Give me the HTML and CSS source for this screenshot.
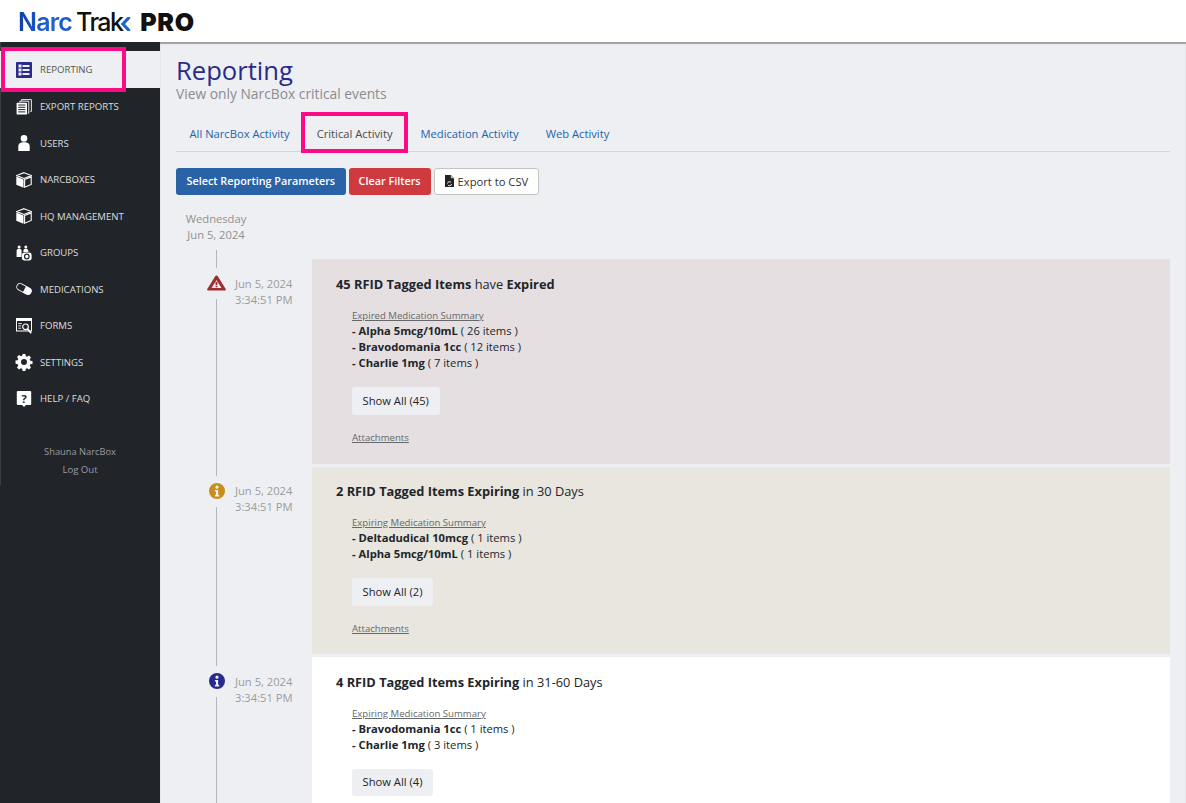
FILE: index.html
```html
<!DOCTYPE html>
<html lang="en">
<head>
<meta charset="utf-8">
<title>NarcTrak PRO - Reporting</title>
<link rel="stylesheet" href="styles.css">
</head>
<body>
<svg class="defs" width="0" height="0" aria-hidden="true">
  <symbol id="box" viewBox="0 0 16 16"><path d="M8 .7 15.300 3.600 8 6.500.7 3.600Z" fill="none" stroke="currentColor" stroke-width="1.100"/><path d="M.3 4.600 7.500 7.500V15.800L.3 12.800Z" fill="currentColor"/><path d="M15.200 4.900V12.500L8.600 15.200V7.600Z" fill="none" stroke="currentColor" stroke-width="1.100"/></symbol>
  <symbol id="info" viewBox="0 0 16 16"><path fill-rule="evenodd" d="M8 0a8 8 0 1 0 0 16A8 8 0 0 0 8 0ZM8 2.600a1.600 1.600 0 1 1 0 3.200 1.600 1.600 0 0 1 0-3.200ZM5.900 6.900h3.200v4.900h1.100v1.600H5.900v-1.600H7V8.500H5.900Z" fill="currentColor"/></symbol>
</svg>
<header class="topbar">
  <div class="logo"><span class="logo-narc">Narc</span><span class="logo-trak">Trak</span><svg class="logo-chevron" viewBox="0 0 10 14"><path d="M8.500 0 2 7l6.500 7" fill="none" stroke="#1f62cc" stroke-width="3.200"/></svg><span class="logo-pro">PRO</span></div>
</header>
<div class="shell">
  <nav class="sidebar">
    <a class="nav-item active"><svg class="nav-icon" viewBox="0 0 16 16"><rect width="16" height="16" rx="1" fill="#2a2a8c"/><path d="M2.500 2.500h3v3h-3zM2.500 6.500h3v3h-3zM2.500 10.500h3v3h-3zM6.500 3h7v2h-7zM6.500 7h7v2h-7zM6.500 11h7v2h-7z" fill="#eeeff2"/></svg>Reporting<span class="callout callout-nav"></span></a>
    <a class="nav-item"><svg class="nav-icon" viewBox="0 0 16 16"><g fill="none" stroke="currentColor" stroke-width=".9"><path d="M5.500 1.800V.6h9.900v11.800h-1.200"/><path d="M3.800 3.400V2.200h9v12h-1.100"/></g><rect x=".6" y="3.800" width="10.400" height="11.800" rx=".6" fill="currentColor"/><path d="M2.200 6h7.200M2.200 8.300h7.200M2.200 10.600h7.200M2.200 12.900h7.200" stroke="#212529" stroke-width="1"/></svg>Export Reports</a>
    <a class="nav-item"><svg class="nav-icon" viewBox="0 0 16 16"><circle cx="8" cy="3.400" r="3.300" fill="currentColor"/><path d="M2.300 16V11.500C2.300 8.600 4.500 7.300 8 7.300s5.700 1.300 5.700 4.200V16Z" fill="currentColor"/></svg>Users</a>
    <a class="nav-item"><svg class="nav-icon"><use href="#box"/></svg>NarcBoxes</a>
    <a class="nav-item"><svg class="nav-icon"><use href="#box"/></svg>HQ Management</a>
    <a class="nav-item"><svg class="nav-icon" viewBox="0 0 16 16"><g fill="currentColor"><circle cx="3.100" cy="1.900" r="1.500"/><circle cx="9.800" cy="1.900" r="1.500"/><path d="M.6 12V5.700c0-1.300.9-2 2.500-2s2.500.7 2.500 2V12ZM7.400 7V5.700c0-1.300.9-2 2.400-2s2.500.7 2.500 2V7Z"/><rect x="6" y="7.400" width="9.600" height="8.200" rx="2.400"/></g><circle cx="10.800" cy="11.500" r="2.300" fill="none" stroke="#212529" stroke-width="1.200"/></svg>Groups</a>
    <a class="nav-item"><svg class="nav-icon" viewBox="0 0 16 16"><g transform="rotate(28 8 8)"><rect x=".2" y="4.600" width="15.600" height="6.800" rx="3.400" fill="none" stroke="currentColor" stroke-width=".9"/><path d="M8.500 4.600h3.900a3.400 3.400 0 0 1 0 6.800H8.500Z" fill="currentColor"/></g></svg>Medications</a>
    <a class="nav-item"><svg class="nav-icon" viewBox="0 0 16 16"><rect x=".5" y=".5" width="15" height="12.500" fill="none" stroke="currentColor"/><rect width="16" height="3" fill="currentColor"/><path d="M2.300 5.600h3.500M2.300 7.900h2.800M2.300 10.200h2.800" stroke="currentColor" stroke-width=".9"/><circle cx="9.500" cy="8.800" r="2.800" fill="#212529" stroke="currentColor" stroke-width="1.200"/><path d="m11.500 10.900 3.700 4.200" stroke="currentColor" stroke-width="1.600"/></svg>Forms</a>
    <a class="nav-item"><svg class="nav-icon" viewBox="0 0 16 16"><path fill-rule="evenodd" d="M6.600 0h2.800l.4 2.200 1.300.6 1.900-1.200 2 2-1.300 1.800.6 1.300 2.200.4v2.800l-2.200.4-.6 1.300 1.300 1.900-2 2-1.900-1.300-1.300.6-.4 2.200H6.600l-.4-2.200-1.300-.6-1.900 1.300-2-2 1.300-1.900-.6-1.300L-.5 9.400V6.600l2.200-.4.600-1.300L1 3l2-2 1.900 1.300 1.300-.6ZM8 5a3 3 0 1 0 0 6 3 3 0 0 0 0-6Z" fill="currentColor"/></svg>Settings</a>
    <a class="nav-item"><svg class="nav-icon" viewBox="0 0 16 16"><path d="M1.800 0h12.400a1 1 0 0 1 1 1v12a1 1 0 0 1-1 1H10l-2 2-2-2H1.800a1 1 0 0 1-1-1V1a1 1 0 0 1 1-1Z" fill="currentColor"/><text class="help-mark" x="8" y="11.500" text-anchor="middle">?</text></svg>Help / FAQ</a>
    <div class="account">
      <div class="account-name">Shauna NarcBox</div>
      <div>Log Out</div>
    </div>
  </nav>
  <main class="content">
    <h1 class="page-title">Reporting</h1>
    <p class="page-sub">View only NarcBox critical events</p>
    <div class="tabs">
      <a class="tab">All NarcBox Activity</a>
      <a class="tab current">Critical Activity<span class="callout callout-tab"></span></a>
      <a class="tab">Medication Activity</a>
      <a class="tab">Web Activity</a>
    </div>
    <div class="actions">
      <button class="btn btn-blue">Select Reporting Parameters</button>
      <button class="btn btn-red">Clear Filters</button>
      <button class="btn btn-white"><svg class="csv-icon" viewBox="0 0 9 12"><path d="M0 0h5.800L9 3.200V12H0Z" fill="#222"/><path d="M5.800 0V3.200H9Z" fill="#bbb"/><path d="M2.500 8.500a2 2 0 0 1 3.600-1M6.500 9a2 2 0 0 1-3.600 1" fill="none" stroke="#fff" stroke-width=".9"/></svg>Export to CSV</button>
    </div>
    <div class="day">Wednesday<br>Jun 5, 2024</div>
    <section class="timeline">
      <article class="entry entry-first">
        <div class="rail">
          <span class="seg seg-top"></span>
          <svg class="mark mark-warn" viewBox="0 0 20 16"><path fill-rule="evenodd" d="M10 0c.5 0 .9.2 1.200.7l8.500 13.500c.5.800 0 1.800-1 1.800H1.300c-1 0-1.500-1-1-1.800L8.800.7C9.100.2 9.500 0 10 0ZM10 4.800 4.800 13.300H15.200ZM9 6.800h2v3.400H9ZM9 10.900h2v1.700H9Z" fill="#9c2f31"/></svg>
          <span class="seg seg-rest"></span>
        </div>
        <div class="stamp">Jun 5, 2024<br>3:34:51 PM</div>
        <div class="card card-red">
          <h2 class="card-title"><b>45 RFID Tagged Items</b> have <b>Expired</b></h2>
          <div class="summary">
            <u class="sum-head">Expired Medication Summary</u>
            <div><b>- Alpha 5mcg/10mL</b> ( 26 items )</div>
            <div><b>- Bravodomania 1cc</b> ( 12 items )</div>
            <div><b>- Charlie 1mg</b> ( 7 items )</div>
            <button class="show-all">Show All (45)</button>
            <u class="attach">Attachments</u>
          </div>
        </div>
      </article>
      <article class="entry entry-second">
        <div class="rail">
          <span class="seg seg-top"></span>
          <svg class="mark mark-amber"><use href="#info"/></svg>
          <span class="seg seg-rest"></span>
        </div>
        <div class="stamp">Jun 5, 2024<br>3:34:51 PM</div>
        <div class="card card-tan">
          <h2 class="card-title"><b>2 RFID Tagged Items Expiring</b> in 30 Days</h2>
          <div class="summary">
            <u class="sum-head">Expiring Medication Summary</u>
            <div><b>- Deltadudical 10mcg</b> ( 1 items )</div>
            <div><b>- Alpha 5mcg/10mL</b> ( 1 items )</div>
            <button class="show-all">Show All (2)</button>
            <u class="attach">Attachments</u>
          </div>
        </div>
      </article>
      <article class="entry">
        <div class="rail">
          <span class="seg seg-top"></span>
          <svg class="mark mark-navy"><use href="#info"/></svg>
          <span class="seg seg-rest"></span>
        </div>
        <div class="stamp">Jun 5, 2024<br>3:34:51 PM</div>
        <div class="card card-white">
          <h2 class="card-title"><b>4 RFID Tagged Items Expiring</b> in 31-60 Days</h2>
          <div class="summary">
            <u class="sum-head">Expiring Medication Summary</u>
            <div><b>- Bravodomania 1cc</b> ( 1 items )</div>
            <div><b>- Charlie 1mg</b> ( 3 items )</div>
            <button class="show-all show-last">Show All (4)</button>
          </div>
        </div>
      </article>
    </section>
  </main>
</div>
</body>
</html>
```
FILE: styles.css
```css
* { box-sizing: border-box; }
html, body { height: 100%; }
body {
  margin: 0;
  height: 803px;
  overflow: hidden;
  display: flex;
  flex-direction: column;
  font-family: "Open Sans", sans-serif;
  background: #eeeff2;
  color: #212529;
}
.defs { position: absolute; }

.topbar {
  flex: none;
  height: 42px;
  background: #fff;
  padding: 8px 0 0 18px;
}
.logo {
  display: flex;
  align-items: baseline;
  font-family: Inter, sans-serif;
  font-size: 25px;
  line-height: 28px;
  color: #111;
}
.logo-narc {
  font-weight: 600;
  letter-spacing: -0.8px;
  background: linear-gradient(100deg, #0f3ea8 0%, #1f62d0 60%, #1a55bd 100%);
  -webkit-background-clip: text;
  background-clip: text;
  color: transparent;
}
.logo-trak { margin-left: 4px; font-weight: 500; letter-spacing: -1.6px; }
.logo-chevron { width: 10px; height: 14px; margin-left: -1px; }
.logo-pro { margin-left: 9px; font-weight: 900; letter-spacing: 0.6px; }

.shell { flex: 1; display: flex; min-height: 0; }

.sidebar {
  flex: none;
  width: 160px;
  background: #212529 linear-gradient(#3a3e42, #3a3e42) no-repeat 0 0 / 1px 443px;
  padding-top: 9.25px;
}
.nav-item {
  position: relative;
  display: flex;
  align-items: center;
  height: 36.5px;
  padding-left: 16px;
  font-size: 9.6px;
  text-transform: uppercase;
  color: #dcdddf;
}
.nav-item.active { background: #eeeff2; color: #555; height: 37px; }
.nav-icon {
  flex: none;
  width: 16px;
  height: 16px;
  margin-right: 8px;
  color: #fff;
  overflow: visible;
}
.help-mark { font: 700 11px "Open Sans", sans-serif; fill: #212529; }
.account {
  margin-top: 26px;
  text-align: center;
  font-size: 9.6px;
  line-height: 18px;
  color: #9a9ca0;
}
.account-name { font-size: 9.3px; }

.callout {
  position: absolute;
  border: 4px solid #ff0a85;
  pointer-events: none;
}
.callout-nav { left: 1px; top: -4px; width: 125px; height: 45px; }
.callout-tab { left: -2.5px; top: -3px; right: -1px; bottom: -2px; }

.content {
  flex: 1;
  min-width: 0;
  padding: 14px 16px 0;
  box-shadow: inset 0 2px 1px #a0a0a0;
}
.page-title {
  margin: 0;
  font-size: 25.6px;
  line-height: 30px;
  font-weight: 400;
  color: #2a2a8c;
}
.page-sub {
  margin: 0;
  font-size: 13.8px;
  line-height: 16px;
  color: #8a8c90;
}
.tabs {
  display: flex;
  height: 37px;
  margin-top: 13px;
  border-bottom: 1px solid #d3d4d6;
}
.tab {
  position: relative;
  height: 36px;
  padding: 0 13.5px;
  font-size: 11.2px;
  line-height: 38px;
  color: #2563a8;
}
.tab.current { color: #4a4a4a; padding-right: 14.5px; }

.actions { display: flex; gap: 3px; margin-top: 16px; }
.btn {
  height: 27px;
  padding: 0 10.5px 2px;
  border-radius: 3px;
  border: 0;
  font: 600 10.8px "Open Sans", sans-serif;
  display: flex;
  align-items: center;
}
.btn-blue { background: #2a62a8; color: #fff; }
.btn-red { background: #cf3a3f; color: #fff; padding: 0 10px 2px; }
.btn-white { background: #fff; border: 1px solid #c4c4c4; color: #333; padding: 0 10px 1px; font-size: 11.2px; font-weight: 400; }
.csv-icon { width: 9px; height: 12px; margin-right: 4px; }

.day {
  width: 80px;
  margin-top: 16px;
  text-align: center;
  font-size: 11.2px;
  line-height: 16px;
  color: #8f9194;
}
.timeline { margin-top: 7px; }
.entry { display: flex; height: 190px; }
.entry-first { height: 217px; }
.rail {
  flex: none;
  width: 24px;
  margin-left: 28.5px;
  margin-right: 6.5px;
  display: flex;
  flex-direction: column;
  align-items: center;
}
.seg { width: 1px; background: #b5b6b8; }
.seg-top { height: 9px; }
.entry-first .seg-top { height: 18px; }
.seg-rest { flex: 1; }
.mark { flex: none; width: 16px; height: 16px; margin: 7px 0 8px; }
.mark-warn { width: 19px; }
.mark-amber { color: #c98f1c; }
.mark-navy { color: #2a2a8c; }
.stamp {
  flex: none;
  width: 77px;
  padding-top: 17px;
  font-size: 11.2px;
  line-height: 16px;
  color: #9a9c9f;
}
.entry-first .stamp { padding-top: 26px; }
.entry-second .stamp { padding-top: 16px; }
.card {
  flex: 1;
  margin-bottom: 3px;
  padding: 17px 24px 0;
}
.entry-first .card { margin-top: 9px; }
.entry-second .card { padding-top: 16px; }
.card-red { background: #e5dfe1; }
.card-tan { background: #e8e6df; }
.card-white { background: #fff; }
.card-title {
  margin: 0;
  font-size: 12.8px;
  line-height: 17px;
  font-weight: 400;
}
.card-title b, .summary b { font-weight: 700; }
.summary {
  margin: 15px 0 0 16px;
  font-size: 11.2px;
  line-height: 16px;
}
.sum-head {
  display: block;
  margin-bottom: -1px;
  font-size: 9.6px;
  color: #66686b;
}
.show-all {
  display: block;
  margin-top: 16px;
  height: 28px;
  padding: 0 11px 2px 10.5px;
  border: 0;
  border-radius: 3px;
  background: #eeeff2;
  color: #212529;
  font: 400 11.2px "Open Sans", sans-serif;
}
.show-last { height: 27px; }
.attach {
  display: block;
  margin-top: 15px;
  font-size: 9.6px;
  color: #66686b;
}
```
